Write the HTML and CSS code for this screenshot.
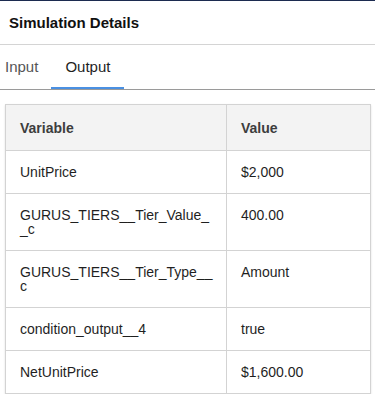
FILE: index.html
```html
<!DOCTYPE html>
<html lang="en">
<head>
    <meta charset="UTF-8">
    <meta name="viewport" content="width=device-width, initial-scale=1.0">
    <title>Simulation Details</title>
    <link rel="stylesheet" href="styles.css">
</head>
<body>
    <div class="panel">
        <h2 class="panel-title">Simulation Details</h2>
        <div class="tabs">
            <span class="tab">Input</span>
            <span class="tab active">Output</span>
        </div>
        <div class="table-wrap">
            <table class="output-table">
                <thead>
                    <tr>
                        <th class="col-var">Variable</th>
                        <th>Value</th>
                    </tr>
                </thead>
                <tbody>
                    <tr><td>UnitPrice</td><td>$2,000</td></tr>
                    <tr><td>GURUS_TIERS__Tier_Value__c</td><td>400.00</td></tr>
                    <tr><td>GURUS_TIERS__Tier_Type__c</td><td>Amount</td></tr>
                    <tr><td>condition_output__4</td><td>true</td></tr>
                    <tr><td>NetUnitPrice</td><td>$1,600.00</td></tr>
                </tbody>
            </table>
        </div>
    </div>
</body>
</html>
```

FILE: styles.css
```css
body {
    margin: 0;
    font-family: "Liberation Sans", Arial, sans-serif;
    color: #1f1f1f;
    background: #fff;
}
.panel {
    border-top: 1px solid #1c2b50;
}
.panel-title {
    margin: 0;
    height: 43px;
    line-height: 43px;
    padding-left: 9px;
    font-size: 15px;
    font-weight: bold;
    color: #111;
    border-bottom: 1px solid #d4d4d4;
}
.tabs {
    display: flex;
    height: 44px;
    border-bottom: 1px solid #9a9a9a;
}
.tab {
    box-sizing: border-box;
    height: 44px;
    line-height: 44px;
    padding: 0 14px;
    font-size: 15px;
    color: #555;
}
.tab:first-child {
    padding-left: 5px;
    padding-right: 13px;
}
.tab.active {
    color: #1f1f1f;
    border-bottom: 2px solid #4a90e2;
}
.table-wrap {
    padding: 14px 4px 0 5px;
}
.output-table {
    width: 100%;
    border-collapse: collapse;
    table-layout: fixed;
    font-size: 14px;
    line-height: 14px;
    box-shadow: 0 1px 2px rgba(0, 0, 0, 0.12);
}
.output-table th,
.output-table td {
    border: 1px solid #d3d3d3;
    text-align: left;
    vertical-align: top;
    padding: 14px 10px 14px 14px;
    word-break: break-all;
}
.output-table th {
    background: #f3f3f3;
    color: #3d3d3d;
    font-weight: bold;
    padding-top: 16px;
    padding-bottom: 15px;
}
.col-var {
    width: 196px;
}
```
